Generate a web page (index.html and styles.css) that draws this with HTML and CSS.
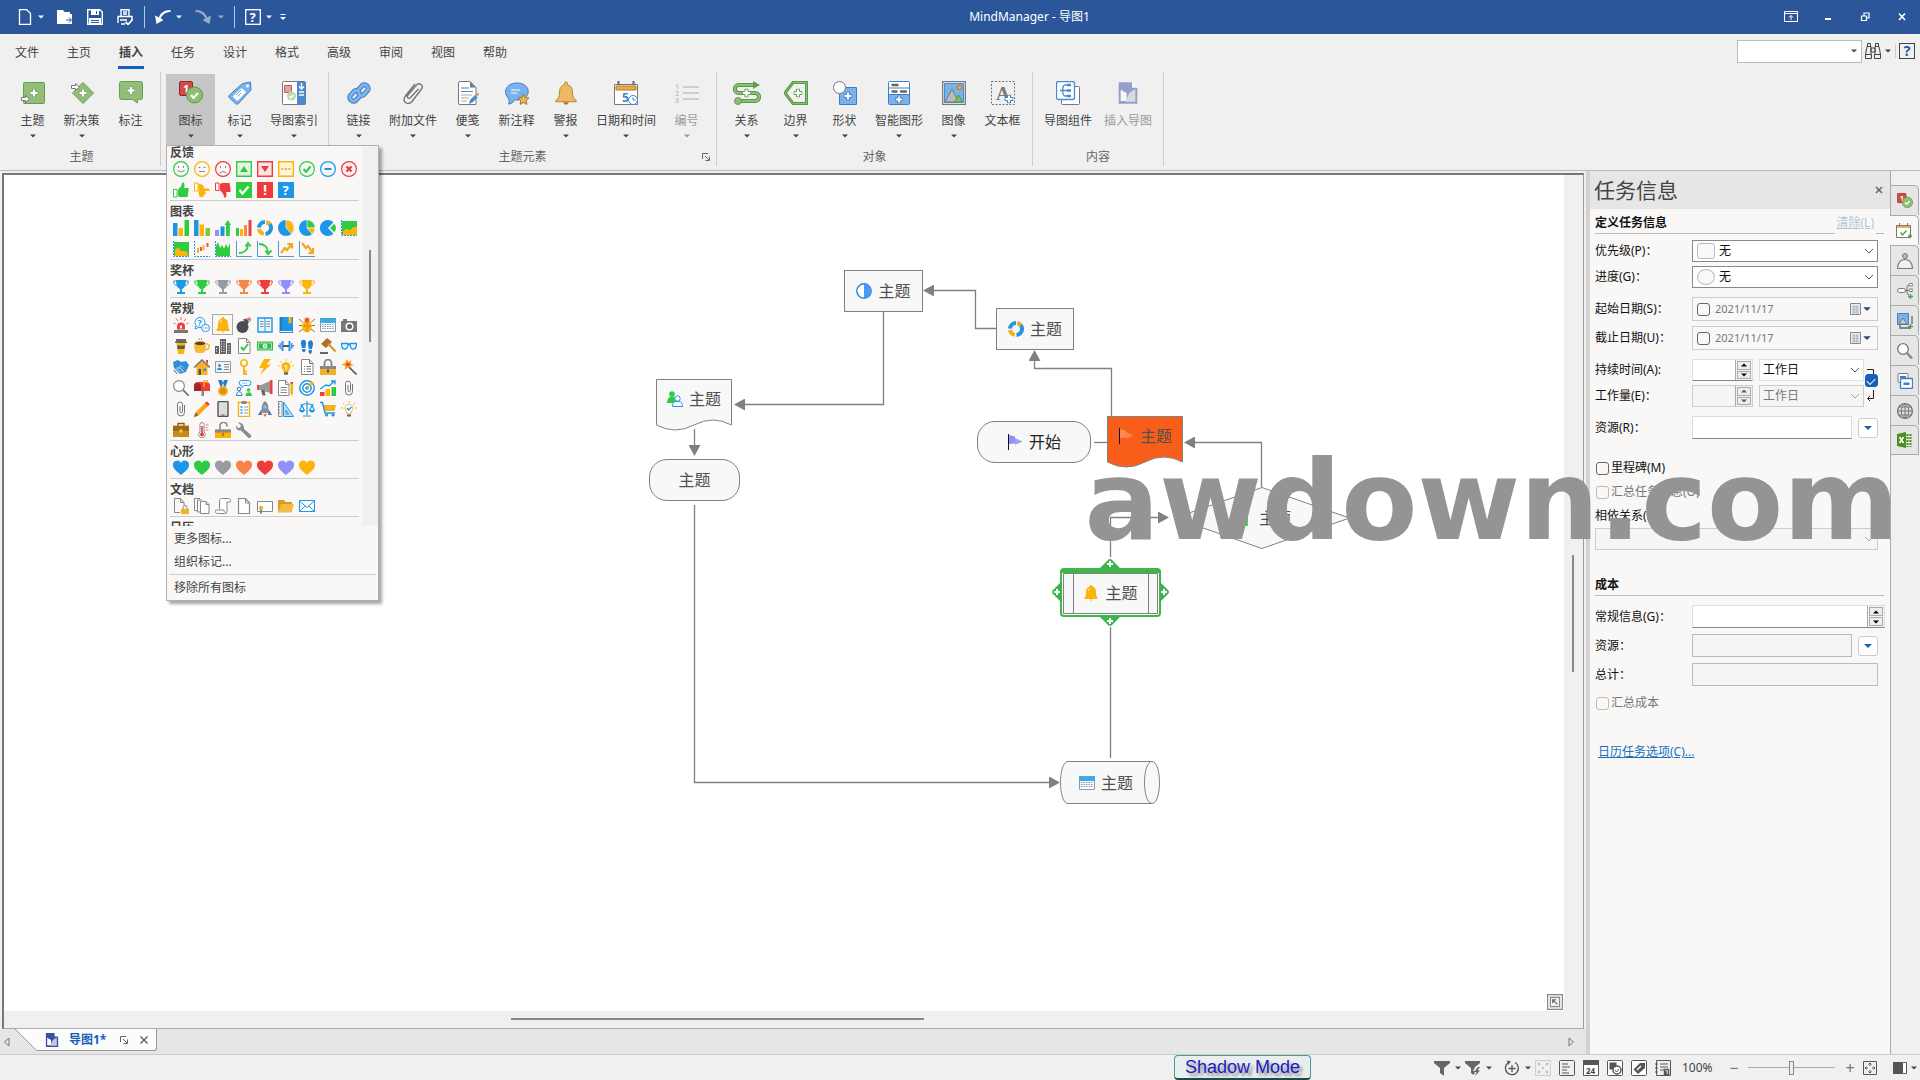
FILE: index.html
```html
<!DOCTYPE html>
<html lang="zh-CN">
<head>
    <meta charset="UTF-8">
    <meta name="viewport" content="width=device-width, initial-scale=1.0">
    <title>MindManager - 导图1</title>
    <link rel="stylesheet" href="styles.css">
</head>
<body>
    <!-- shared icons -->
    <svg class="sprite">
        <symbol id="caret" viewBox="0 0 8 8"><path d="M1 2.5h6L4 5.5z" fill="currentColor"/></symbol>
        <symbol id="chevron" viewBox="0 0 10 10"><path d="M1 3l4 4 4-4" fill="none" stroke="currentColor"/></symbol>
        <symbol id="launch" viewBox="0 0 10 10"><path d="M1.5 7V1.5H7M4 4l4 4M8.500 4.500v4h-4" fill="none" stroke="currentColor"/></symbol>
        <symbol id="trophy" viewBox="0 0 16 16"><path d="M3 1h10c0 4-1 8-4 9v3h3v2H4v-2h3v-3C4 9 3 5 3 1z" fill="currentColor"/><path d="M3 2H.7c0 3 1 4 3.300 4.500M13 2h2.300c0 3-1 4-3.300 4.500" fill="none" stroke="currentColor"/></symbol>
        <symbol id="heart" viewBox="0 0 16 16"><path d="M8 15C3 11 0 8.500 0 5a4.200 4.200 0 0 1 8-2 4.200 4.200 0 0 1 8 2c0 3.500-3 6-8 10z" fill="currentColor"/></symbol>
        <symbol id="bell" viewBox="0 0 16 16"><path d="M8 0c1 0 1.300.7 1.300 1.400C12 2 13 4 13 7c0 3 .3 4.500 1.500 5.500V14h-13v-1.500C2.700 11.500 3 10 3 7c0-3 1-5 3.700-5.600C6.700.7 7 0 8 0zM6.500 14.500h3L8 16z" fill="#fcb40b"/><path d="M5.500 6c0-1.500.6-2.300 1.500-2.600" fill="none" stroke="#fff" stroke-width=".8"/></symbol>
        <symbol id="donut" viewBox="0 0 16 16"><g fill="none" stroke-width="4"><path d="M9.500 2.200A6 6 0 0 1 8.500 14" stroke="#2196e3"/><path d="M6.800 13.900A6 6 0 0 1 2 9" stroke="#f6b21b"/><path d="M2 7.700A6 6 0 0 1 8 2" stroke="#2196e3"/><path d="M9.500 2.200a6 6 0 0 1 3.300 2.200" stroke="#f6b21b"/></g></symbol>
        <symbol id="rise" viewBox="0 0 16 16"><path d="M0 10h4v6H0z" fill="#8f8ff5"/><path d="M5.500 6.500h4V16h-4z" fill="#1e90e0"/><path d="M11 16V5H9.500l3.300-5L16 5h-1.200v11z" fill="#2ecc40"/></symbol>
        <symbol id="calendar" viewBox="0 0 16 16"><path d="M.5 1.500h15v13H.5z" fill="#fff" stroke="#8a9aa8"/><path d="M0 1h16v5H0z" fill="#3fa9e0"/><path d="M2 7.500h12M2 9.500h12M2 11.500h12" stroke="#7a9ab5" stroke-dasharray="1.500 1"/></symbol>
        <symbol id="flag" viewBox="0 0 16 16"><path d="M1.500 0v16" stroke="#111"/><path d="M2 1l6 1.500v7L2 10z" fill="currentColor"/><path d="M8 4l7.500 3.500L8 11z" fill="currentColor" opacity=".85"/></symbol>
        <symbol id="clip" viewBox="0 0 16 16"><path d="M11.500 4v7.500a3.500 3.500 0 0 1-7 0V3.500a2.500 2.500 0 0 1 5 0v7a1.200 1.200 0 0 1-2.500 0V5" fill="none" stroke="#777"/></symbol>
        <symbol id="mapdoc" viewBox="0 0 16 18"><path d="M1 1h10l4 4v12H1z" fill="currentColor"/><path d="M11 0l5 5h-5z" fill="#fff"/><path d="M2.500 6.500L7 9v6H2.500z" fill="#fff"/><path d="M13.500 6L9 9l-3 6.500h7.500z" fill="#c4c8d8"/></symbol>
        <symbol id="badge" viewBox="0 0 24 24"><rect x=".5" y=".5" width="13" height="14" rx="1.500" fill="#d34a4a" stroke="#9c2020"/><text x="4" y="12" font-size="11" font-weight="bold" fill="#fff">1</text><circle cx="15.500" cy="14" r="8" fill="#8fbd74" stroke="#579a49"/><path d="M12 14l2.500 3 4.500-5" fill="none" stroke="#fff" stroke-width="2"/></symbol>
        <symbol id="plus" viewBox="0 0 9 9"><path d="M3 .5h3V3h2.500v3H6v2.500H3V6H.5V3H3z" fill="#fff" stroke="currentColor"/></symbol>
    </svg>

    <header class="titlebar">
        <div class="quick">
            <button class="q-small"><svg viewBox="0 0 16 16"><path d="M2.500.5h7l4 4v11h-11z" fill="none" stroke="#fff" stroke-width="1.300"/></svg></button>
            <button class="q-caret"><svg><use href="#caret"/></svg></button>
            <button><svg viewBox="0 0 16 16"><path d="M0 1h6l1.500 2H13v2h2v10H0z" fill="#fff"/><path d="M9 11h5M12 8.500l2.500 2.500-2.500 2.500" fill="none" stroke="#2b579a"/></svg></button>
            <button><svg viewBox="0 0 16 16"><path d="M.7.700h12L15.300 3v12.300H.7z" fill="none" stroke="#fff" stroke-width="1.400"/><path d="M4 1h8v5H4zM2 9h12v6H2z" fill="#fff"/><path d="M9.500 2v3M4 11.500h8M4 13.500h8" stroke="#2b579a"/></svg></button>
            <button><svg viewBox="0 0 16 16"><path d="M4 7V.7h8V7M6 3h4M6 5h4M1 14V7.500h14V11M3 11h7M4 15h4" fill="none" stroke="#fff" stroke-width="1.400"/><path d="M8.500 13l2.500 2.500 4.500-5" fill="none" stroke="#fff" stroke-width="1.800"/></svg></button>
            <i class="q-sep"></i>
            <button class="q-small"><svg viewBox="0 0 16 16"><path d="M15.500 1C9 1 5 4.500 4 8.500L0 6.500 1.500 15l7-4-2.800-1.500C7 5.500 11 3 15.500 3z" fill="#fff"/></svg></button>
            <button class="q-caret"><svg><use href="#caret"/></svg></button>
            <button class="q-dim"><svg viewBox="0 0 16 16"><path d="M.5 1C7 1 11 4.500 12 8.500l4-2L14.500 15l-7-4 2.800-1.500C9 5.500 5 3 .5 3z" fill="#fff"/></svg></button>
            <button class="q-caret q-dim"><svg><use href="#caret"/></svg></button>
            <i class="q-sep"></i>
            <button class="q-small"><svg viewBox="0 0 16 16"><rect x=".7" y=".7" width="14.600" height="14.600" fill="none" stroke="#fff" stroke-width="1.300"/><text x="4.500" y="12.500" font-size="13" font-weight="bold" fill="#fff">?</text></svg></button>
            <button class="q-caret"><svg><use href="#caret"/></svg></button>
            <button class="q-caret q-more"><svg viewBox="0 0 8 8"><path d="M1.500 1.500h5" stroke="#fff"/><path d="M1 4h6L4 7z" fill="#fff"/></svg></button>
        </div>
        <h1>MindManager - 导图1</h1>
        <div class="window-buttons">
            <button><svg viewBox="0 0 14 12"><path d="M.5.5h13v10H.5zM.5 2.500h13M7 9V4.500M5 6.500l2-2 2 2" fill="none" stroke="#fff"/></svg></button>
            <button><svg viewBox="0 0 14 12"><path d="M4 8h6" stroke="#fff" stroke-width="2"/></svg></button>
            <button><svg viewBox="0 0 14 12"><path d="M3.500 5h5v4.500h-5zM6 4.500V2h5v5H9" fill="none" stroke="#fff" stroke-width="1.200"/></svg></button>
            <button><svg viewBox="0 0 14 12"><path d="M4 2.500l6 6.500M10 2.500L4 9" stroke="#fff" stroke-width="1.600"/></svg></button>
        </div>
    </header>

    <nav class="menubar">
        <a href="#">文件</a>
        <a href="#">主页</a>
        <a href="#" class="active">插入</a>
        <a href="#">任务</a>
        <a href="#">设计</a>
        <a href="#">格式</a>
        <a href="#">高级</a>
        <a href="#">审阅</a>
        <a href="#">视图</a>
        <a href="#">帮助</a>
        <div class="find">
            <div class="find-box"><input type="text" aria-label="查找"><svg><use href="#caret"/></svg></div>
            <button><svg class="binoculars" viewBox="0 0 16 16"><path d="M2.500.5h3v3h-3zM10.500.5h3v3h-3zM2 3.500h4v8H.5zM10 3.500h4l1.500 8H10zM.5 11.500h6v4h-6zM9.500 11.500h6v4h-6zM6 5h4v4H6z" fill="none" stroke="#444"/></svg></button>
            <button><svg class="caret"><use href="#caret"/></svg></button>
            <i></i>
            <button class="help">?</button>
        </div>
    </nav>

    <section class="ribbon">
        <div class="group">
            <div class="tools">
                <button><svg viewBox="0 0 24 24"><rect x="2.500" y="1.500" width="21" height="21" rx="1" fill="#93bd78" stroke="#62a050"/><use href="#plus" x="8.500" y="7.500" width="9" height="9" color="#7fae68"/><path d="M.5 16.500h4v-2l4 3.500-4 3.500v-2h-4z" fill="#fff" stroke="#777"/></svg><span>主题</span><svg class="caret"><use href="#caret"/></svg></button>
                <button><svg viewBox="0 0 24 24"><path d="M13 1.500L23.500 12 13 22.500 2.500 12z" fill="#93bd78" stroke="#62a050"/><use href="#plus" x="8.500" y="7.500" width="9" height="9" color="#7fae68"/><path d="M1.500 4.500h4v-2L9.500 6l-4 3.500v-2h-4z" fill="#fff" stroke="#777"/></svg><span>新决策</span><svg class="caret"><use href="#caret"/></svg></button>
                <button><svg viewBox="0 0 24 24"><path d="M2.500.5h19a2 2 0 0 1 2 2v14a2 2 0 0 1-2 2H18.500V22l-5-3.500h-11a2 2 0 0 1-2-2v-14a2 2 0 0 1 2-2z" fill="#93bd78" stroke="#62a050"/><use href="#plus" x="7.500" y="5" width="9" height="9" color="#7fae68"/></svg><span>标注</span></button>
            </div>
            <div class="group-name">主题</div>
        </div>
        <div class="group">
            <div class="tools">
                <div class="dropdown">
                    <button class="open"><svg><use href="#badge"/></svg><span>图标</span><svg class="caret"><use href="#caret"/></svg></button>
                    <div class="gallery">
                        <div class="gallery-body">
                            <div class="gallery-list">
                                <section>
                                    <h3>反馈</h3>
                                    <div class="icons">
                                        <button class="c-green"><svg viewBox="0 0 16 16"><circle cx="8" cy="8" r="7.400" fill="none" stroke="currentColor" stroke-width="1.200"/><path d="M4.500 9.500q3.500 3 7 0" fill="none" stroke="#888"/><path d="M5.500 5v2M10.500 5v2" stroke="#888"/></svg></button>
                                        <button class="c-yellow"><svg viewBox="0 0 16 16"><circle cx="8" cy="8" r="7.400" fill="none" stroke="currentColor" stroke-width="1.200"/><path d="M5 10.500h6M4.500 6.500h2M9.500 6.500h2" stroke="#888"/></svg></button>
                                        <button class="c-red"><svg viewBox="0 0 16 16"><circle cx="8" cy="8" r="7.400" fill="none" stroke="currentColor" stroke-width="1.200"/><path d="M4.500 12q3.500-3 7 0" fill="none" stroke="#888"/><path d="M5.500 5v2M10.500 5v2" stroke="#888"/></svg></button>
                                        <button class="c-green"><svg viewBox="0 0 16 16"><path d="M.7.700h14.600v14.600H.7z" fill="#e2f5e2" stroke="currentColor" stroke-width="1.400"/><path d="M4 11l4-6 4 6z" fill="currentColor"/></svg></button>
                                        <button class="c-red"><svg viewBox="0 0 16 16"><path d="M.7.700h14.600v14.600H.7z" fill="#fbe4e4" stroke="currentColor" stroke-width="1.400"/><path d="M4 5l4 6 4-6z" fill="currentColor"/></svg></button>
                                        <button class="c-yellow"><svg viewBox="0 0 16 16"><path d="M.7.700h14.600v14.600H.7z" fill="#fff5dc" stroke="currentColor" stroke-width="1.400"/><path d="M3.500 8h9" stroke="currentColor" stroke-width="2" stroke-dasharray="2 1.500"/></svg></button>
                                        <button class="c-green"><svg viewBox="0 0 16 16"><circle cx="8" cy="8" r="7.400" fill="none" stroke="currentColor" stroke-width="1.200"/><path d="M4.500 8l2.500 3 4.500-5.500" fill="none" stroke="currentColor" stroke-width="2"/></svg></button>
                                        <button class="c-blue"><svg viewBox="0 0 16 16"><circle cx="8" cy="8" r="7.400" fill="none" stroke="currentColor" stroke-width="1.200"/><path d="M4.500 8h7" stroke="currentColor" stroke-width="2"/></svg></button>
                                        <button class="c-red"><svg viewBox="0 0 16 16"><circle cx="8" cy="8" r="7.400" fill="none" stroke="currentColor" stroke-width="1.200"/><path d="M5.500 5.500l5 5M10.500 5.500l-5 5" stroke="currentColor" stroke-width="2.400"/></svg></button>
                                        <button class="c-green"><svg viewBox="0 0 16 16"><path d="M.5 7.500h3.500V15H.5z" fill="#fff" stroke="currentColor"/><path d="M5 7.500C7 6 9 4 9 .5c2.500-.5 3 2 2 5.500h4.500v3L14.500 15H7l-2-1z" fill="currentColor"/></svg></button>
                                        <button class="c-yellow"><svg viewBox="0 0 16 16"><path d="M.5 1h3.500v8H.5z" fill="#fff" stroke="currentColor"/><path d="M4.500 1.500L9 3l1.500 3.500h5V9H11l1 2.500-2 1.500-1 2H5.500L4.500 10z" fill="currentColor"/></svg></button>
                                        <button class="c-red"><svg viewBox="0 0 16 16"><path d="M.5 1h3.500v7.500H.5z" fill="#fff" stroke="currentColor"/><path d="M5 8.500C7 10 9 12 9 15.500c2.500.5 3-2 2-5.500h4.500V7L14.500 1H7L5 2z" fill="currentColor"/></svg></button>
                                        <button class="c-green"><svg viewBox="0 0 16 16"><path d="M0 0h16v16H0z" fill="currentColor"/><path d="M3.500 8l3 3.500 6-7" fill="none" stroke="#fff" stroke-width="2.200"/></svg></button>
                                        <button class="c-red"><svg viewBox="0 0 16 16"><path d="M0 0h16v16H0z" fill="currentColor"/><path d="M8 3v6.500M8 11v2" stroke="#fff" stroke-width="2.400"/></svg></button>
                                        <button class="c-blue"><svg viewBox="0 0 16 16"><path d="M0 0h16v16H0z" fill="currentColor"/><text x="4.500" y="13" font-size="13" font-weight="bold" fill="#fff">?</text></svg></button>
                                    </div>
                                </section>
                                <section>
                                    <h3>图表</h3>
                                    <div class="icons">
                                        <button><svg viewBox="0 0 16 16"><path d="M0 3h4.500v13H0z" fill="#1e96e8"/><path d="M5.500 8h4.500v8H5.500z" fill="#fcb40b"/><path d="M11.500 0H16v16h-4.500z" fill="#2ecc40"/></svg></button>
                                        <button><svg viewBox="0 0 16 16"><path d="M0 0h4.500v16H0z" fill="#1e96e8"/><path d="M5.500 4.500h4.500V16H5.500z" fill="#fcb40b"/><path d="M11.500 8H16v8h-4.500z" fill="#86c440"/></svg></button>
                                        <button><svg><use href="#rise"/></svg></button>
                                        <button><svg viewBox="0 0 16 16"><path d="M0 8h3v8H0z" fill="#2ecc40"/><path d="M4 9h3v7H4z" fill="#fcb40b"/><path d="M8 5h3v11H8z" fill="#f9844a"/><path d="M12.500 0h3v16h-3z" fill="#ef3b3b"/></svg></button>
                                        <button><svg><use href="#donut"/></svg></button>
                                        <button><svg viewBox="0 0 16 16"><circle cx="8" cy="8" r="8" fill="#1e96e8"/><path d="M8 8V0a8 8 0 0 1 5.500 13.800z" fill="#fcb40b" stroke="#fff" stroke-width=".6"/></svg></button>
                                        <button><svg viewBox="0 0 16 16"><circle cx="8" cy="8" r="8" fill="#1e96e8"/><path d="M8 8V0a8 8 0 0 1 8 8z" fill="#2ecc40" stroke="#fff" stroke-width=".6"/><path d="M8 8h8a8 8 0 0 1-3 6z" fill="#fcb40b" stroke="#fff" stroke-width=".6"/></svg></button>
                                        <button><svg viewBox="0 0 16 16"><path d="M8 8l5.500-5.700A8 8 0 1 0 13.500 13.700z" fill="#1e96e8"/><path d="M10 8l4.300-4.300a7 7 0 0 1 0 8.600z" fill="#2ecc40"/></svg></button>
                                        <button><svg viewBox="0 0 16 16"><path d="M1 1h15v14H1z" fill="#2ecc40"/><path d="M2 15v-4l3-2 4 1 3-3h4v8z" fill="#fcb40b"/><path d="M.5 0v15.500H16" fill="none" stroke="#1e96e8" stroke-dasharray="2 1"/></svg></button>
                                        <button><svg viewBox="0 0 16 16"><path d="M1 1h15v14H1z" fill="#2ecc40"/><path d="M2 15V9l3-3 3 4h5l2 3v2z" fill="#fcb40b"/><path d="M.5 0v15.500H16" fill="none" stroke="#1e96e8" stroke-dasharray="2 1"/></svg></button>
                                        <button><svg viewBox="0 0 16 16"><path d="M4 7v5M9.500 4v5" stroke="#fcb40b" stroke-width="2"/><path d="M7 6v4M13.500 2v4" stroke="#e05a4a" stroke-width="2"/><path d="M.5 0v15.500H16" fill="none" stroke="#1e96e8" stroke-dasharray="2 1"/></svg></button>
                                        <button><svg viewBox="0 0 16 16"><path d="M1 15V5l2-4 2 6 2-3 2 4 2-5 2 4 2-5v13z" fill="#2ecc40"/><path d="M.5 0v15.500H16" fill="none" stroke="#1e96e8" stroke-dasharray="2 1"/></svg></button>
                                        <button><svg viewBox="0 0 16 16"><path d="M3 12c5 0 9-3 9-8M9.500 5.500L12 2l3 3.500" fill="none" stroke="#2ecc40" stroke-width="1.800"/><path d="M.5 0v15.500H16" fill="none" stroke="#4a9ad8"/></svg></button>
                                        <button><svg viewBox="0 0 16 16"><path d="M2 3c5 0 9 3 9 8M8.500 9.500L11 13l3.500-3.500" fill="none" stroke="#2ecc40" stroke-width="1.800"/><path d="M.5 0v15.500H16" fill="none" stroke="#4a9ad8"/></svg></button>
                                        <button><svg viewBox="0 0 16 16"><path d="M3 12l4-5 2 2 4-5M9.500 3H14v4.500" fill="none" stroke="#f6a81b" stroke-width="2.200"/><path d="M.5 0v15.500H16" fill="none" stroke="#4a9ad8"/></svg></button>
                                        <button><svg viewBox="0 0 16 16"><path d="M3 2l4 5 2-2 4 6M14 7v5H9.500" fill="none" stroke="#f6a81b" stroke-width="2.200"/><path d="M.5 0v15.500H16" fill="none" stroke="#4a9ad8"/></svg></button>
                                    </div>
                                </section>
                                <section>
                                    <h3>奖杯</h3>
                                    <div class="icons">
                                        <button class="c-blue"><svg><use href="#trophy"/></svg></button>
                                        <button class="c-green"><svg><use href="#trophy"/></svg></button>
                                        <button class="c-gray"><svg><use href="#trophy"/></svg></button>
                                        <button class="c-orange"><svg><use href="#trophy"/></svg></button>
                                        <button class="c-red"><svg><use href="#trophy"/></svg></button>
                                        <button class="c-violet"><svg><use href="#trophy"/></svg></button>
                                        <button class="c-yellow"><svg><use href="#trophy"/></svg></button>
                                    </div>
                                </section>
                                <section>
                                    <h3>常规</h3>
                                    <div class="icons">
                                        <button><svg viewBox="0 0 16 16"><path d="M4 12.500V9.500a4 4 0 0 1 8 0v3z" fill="#ef3b3b"/><path d="M7 8.500h2v3H7z" fill="#fff"/><path d="M1 13h14v3H1z" fill="#777"/><path d="M8 0v3M3 1.500l2 2.500M13 1.500L11 4M.5 6l2 1M15.500 6l-2 1" stroke="#f06060"/></svg></button>
                                        <button><svg viewBox="0 0 16 16"><circle cx="6" cy="5.500" r="5" fill="#fff" stroke="#1e96e8"/><path d="M2 9l-1 3 3.500-1.500" fill="#fff" stroke="#1e96e8"/><text x="3.500" y="9" font-size="9" font-weight="bold" fill="#1e96e8">?</text><ellipse cx="11.500" cy="11" rx="4" ry="3.600" fill="#fff" stroke="#1e96e8"/><path d="M9.500 11h4" stroke="#1e96e8" stroke-dasharray="1 .5"/></svg></button>
                                        <button class="selected"><svg><use href="#bell"/></svg></button>
                                        <button><svg viewBox="0 0 16 16"><circle cx="6.500" cy="10" r="6" fill="#4b4b55"/><path d="M7 2.500l4-1 2 4-2 2z" fill="#4b4b55"/><path d="M10 3q2-2 4-1" fill="none" stroke="#888"/><path d="M13.500 0l.7 1.500 1.800.5-1.500 1 .3 2-1.800-1.200L11.500 4l.6-1.500-.6-1.300z" fill="#f26b5b"/></svg></button>
                                        <button><svg viewBox="0 0 16 16"><path d="M1 1h14v14H1z" fill="#eaf5fc" stroke="#1e96e8" stroke-width="1.400"/><path d="M8 1v14" stroke="#1e96e8"/><path d="M3 4.500h3.500M3 7h3.500M3 9.500h3.500M9.500 4.500H13M9.500 7H13M9.500 9.500H13" stroke="#888"/></svg></button>
                                        <button><svg viewBox="0 0 16 16"><path d="M1.500 0H15v16H1.500z" fill="#1e96e8"/><path d="M3 0v16" stroke="#1565a8"/><path d="M10.500 0h3v7L12 5.500 10.500 7z" fill="#fcb40b"/><path d="M2 14.500h12" stroke="#fff"/></svg></button>
                                        <button><svg viewBox="0 0 16 16"><path d="M0 2l4 3.500M16 2l-4 3.500M0 8.500h16M0 15l4-3M16 15l-4-3" stroke="#a87818"/><ellipse cx="8" cy="9.500" rx="4.800" ry="6" fill="#fcb40b"/><circle cx="8" cy="3" r="2.500" fill="#ef5b3b"/><path d="M8 5v10" stroke="#b87a10" stroke-width=".7"/><circle cx="6" cy="9" r=".8" fill="#ef3b3b"/><circle cx="10" cy="9" r=".8" fill="#ef3b3b"/></svg></button>
                                        <button><svg><use href="#calendar"/></svg></button>
                                        <button><svg viewBox="0 0 16 16"><path d="M0 4h2V2h4v2h10v11H0z" fill="#777"/><circle cx="8.500" cy="9.500" r="4" fill="#fff"/><circle cx="8.500" cy="9.500" r="2.500" fill="#666"/></svg></button>
                                        <button><svg viewBox="0 0 16 16"><path d="M3 1h10v2.500h1V5H2V3.500h1z" fill="#666"/><path d="M3.500 5h9L11 16H5z" fill="#fcb40b"/><path d="M4 7.500h8l-.5 3.500h-7z" fill="#5c5c5c"/></svg></button>
                                        <button><svg viewBox="0 0 16 16"><path d="M0 6c1 2 11 2 12 0 0 5-1 8-3 9H3C1 14 0 11 0 6z" fill="#f4bb35"/><ellipse cx="6" cy="5.500" rx="5.500" ry="2.200" fill="#5c4326" stroke="#f4bb35"/><path d="M12 6c4-1 5 5-1 6" fill="none" stroke="#f4bb35" stroke-width="1.600"/><path d="M5 0v2M7.500 0v2" stroke="#999"/></svg></button>
                                        <button><svg viewBox="0 0 16 16"><path d="M5 1h6v15H5zM0 8h4v8H0zM12 5h4v11h-4z" fill="#666"/><path d="M6.500 3v12M9 3v12M1.500 10v5M14 7v8" stroke="#fff" stroke-dasharray="1 1.500"/></svg></button>
                                        <button><svg viewBox="0 0 16 16"><path d="M2.500.5h8l3.500 4v11H2.500z" fill="#fff" stroke="#888"/><path d="M10.500.5v4H14" fill="none" stroke="#888"/><path d="M5 9l2.500 3L12 6" fill="none" stroke="#2ecc40" stroke-width="2"/></svg></button>
                                        <button><svg viewBox="0 0 16 16"><path d="M0 3.500h16v9H0z" fill="#2dbb48"/><path d="M1.500 5h13v6h-13z" fill="none" stroke="#fff" stroke-width=".6"/><circle cx="8" cy="8" r="2.300" fill="#fff"/><path d="M8 6.500v3" stroke="#2dbb48"/></svg></button>
                                        <button><svg viewBox="0 0 16 16"><path d="M5 8h6" stroke="#555" stroke-width="2"/><path d="M3.500 3h2v10h-2zM10.500 3h2v10h-2z" fill="#1e96e8"/><path d="M1.500 5h1.500v6H1.500zM13 5h1.500v6H13zM0 7h1.500v2H0zM14.500 7H16v2h-1.500z" fill="#7f7ff0"/></svg></button>
                                        <button><svg viewBox="0 0 16 16"><path d="M2 6c-1-4 4-6 5-2 .5 3-1 4-.5 6H3zM3 11h3.500c.5 4-3 4-3.500 1zM9 6c0-5 5-5 5 0 0 2-1 3-1 5H9.700zM9.500 12H13c0 5-3 5-3.500 1z" fill="#1e80d0"/></svg></button>
                                        <button><svg viewBox="0 0 16 16"><path d="M1 6l6-6 5 4-6 6z" fill="#a8741d"/><path d="M8 5.500l7.500 8" stroke="#c9952c" stroke-width="2"/><path d="M0 14h8v2H0z" fill="#666"/></svg></button>
                                        <button><svg viewBox="0 0 16 16"><path d="M.5 5.500H7c0 8-6.500 7-6.500 0zM9 5.500h6.500c0 7-6.500 8-6.500 0zM7 6.500h2" fill="#eaf6fd" stroke="#1e96e8" stroke-width="1.300"/></svg></button>
                                        <button><svg viewBox="0 0 16 16"><path d="M0 3l5-2 3 2 5-1 3 4-3 7-6 2-6-6z" fill="#2d8fd5"/><path d="M2 9l5 5 6-2-5-6-3 2z" fill="#7dbbe6"/><path d="M1 11l3 4M8 8l4 4M6 10l3 4" stroke="#1e6ca8"/></svg></button>
                                        <button><svg viewBox="0 0 16 16"><path d="M8 1L0 8.500h2.500V16h11V8.500H16z" fill="#f4b32a"/><path d="M0 8.500L8 1l8 7.500" fill="none" stroke="#777" stroke-width="1.600"/><path d="M12 1h2v4l-2-2z" fill="#ef3b3b"/><path d="M4.500 10H7v6H4.500z" fill="#555"/><path d="M9.500 9.500H12V12H9.500z" fill="#1e96e8"/></svg></button>
                                        <button><svg viewBox="0 0 16 16"><path d="M.5 2.500h15v11H.5z" fill="#f2f2f2" stroke="#999"/><circle cx="4.500" cy="6.500" r="1.500" fill="#1e96e8"/><path d="M2 11c0-3 5-3 5 0z" fill="#1e96e8"/><path d="M9 5.500h5M9 8h5M9 10.500h5" stroke="#888"/></svg></button>
                                        <button><svg viewBox="0 0 16 16"><circle cx="8" cy="4" r="3.200" fill="none" stroke="#fcb40b" stroke-width="1.600"/><path d="M8 7v9M8 12.500h3M8 15h3" stroke="#fcb40b" stroke-width="1.800"/></svg></button>
                                        <button><svg viewBox="0 0 16 16"><path d="M7 0h7L9.500 5.500H14L3 16l3.500-7H2z" fill="#fcb40b"/></svg></button>
                                        <button><svg viewBox="0 0 16 16"><path d="M5.500 13.500V11.500C1.500 8 4 3 8 3s6.500 5 2.500 8.500v2z" fill="#fcb40b"/><path d="M6 14.500h4" stroke="#666" stroke-width="2.400"/><path d="M8 7v4M6.500 7h3" stroke="#fff"/><path d="M8 0v2M2 2l1.500 1.500M14 2l-1.500 1.500M0 7h2M14 7h2" stroke="#f6c21b"/></svg></button>
                                        <button><svg viewBox="0 0 16 16"><path d="M2.500.5h8l3.500 4v11H2.500z" fill="#fff" stroke="#888"/><path d="M10.500.5v4H14M5 7.500h1M7.500 7.500H12M5 10h1M7.500 10H12M5 12.500h1M7.500 12.500H12" fill="none" stroke="#777"/></svg></button>
                                        <button><svg viewBox="0 0 16 16"><path d="M4.500 7.500V4a3.500 3.500 0 0 1 7 0v3.500" fill="none" stroke="#888" stroke-width="1.800"/><path d="M0 7h16v9H0z" fill="#f2b22c"/><path d="M0 7h16v3H0z" fill="#888"/><path d="M8 10.500v3" stroke="#555" stroke-width="2"/></svg></button>
                                        <button><svg viewBox="0 0 16 16"><path d="M6 0l1.500 3 3-2-.8 3.500L13 6l-3.500 1L10 11 7 8.500 3.500 11l1-4L0 5.500 4 4z" fill="#f9a01b"/><circle cx="7" cy="5.500" r="1.800" fill="#ef3b3b"/><path d="M8.500 8.500l7 7" stroke="#555" stroke-width="1.600"/></svg></button>
                                        <button><svg viewBox="0 0 16 16"><circle cx="6" cy="6" r="5.400" fill="#fff" stroke="#888" stroke-width="1.200"/><path d="M10 10l6 6" stroke="#777" stroke-width="1.800"/></svg></button>
                                        <button><svg viewBox="0 0 16 16"><path d="M0 11V6a4 4 0 0 1 4-4h8a4 4 0 0 1 4 4v5z" fill="#ef3b3b"/><path d="M0 11V6.500a3.500 3.500 0 0 1 7 0V11z" fill="#a82222"/><path d="M7.500 11h2.500v5H7.500z" fill="#888"/><path d="M10 7V0h3v3" fill="none" stroke="#f6b21b" stroke-width="1.500"/></svg></button>
                                        <button><svg viewBox="0 0 16 16"><path d="M3 0h4l2 6-3 2zM13 0H9L7 6l3 2z" fill="#1e80d0"/><circle cx="8" cy="11" r="5" fill="#f6b21b"/><circle cx="8" cy="11" r="3" fill="#d8920e"/></svg></button>
                                        <button><svg viewBox="0 0 16 16"><path d="M5.500.500h7a2 2 0 0 1 0 5H8l-2 2v-2a2 2 0 0 1-.5-5z" fill="#fff" stroke="#1e96e8"/><path d="M6.500 3h5" stroke="#1e96e8" stroke-dasharray="1 .7"/><circle cx="3" cy="9" r="1.800" fill="none" stroke="#1e80d0"/><path d="M.5 15.500c0-5 5.500-5 5.500 0z" fill="none" stroke="#1e80d0"/><circle cx="12.500" cy="10" r="1.800" fill="#2ecc40"/><path d="M9.500 16c0-5 6.500-5 6.500 0z" fill="#2ecc40"/></svg></button>
                                        <button><svg viewBox="0 0 16 16"><path d="M0 5h4L13 1v12L4 10H0z" fill="#999"/><path d="M13 0h2.500v14H13zM0 5h2v5H0z" fill="#ef4040"/><path d="M4 10h3.500l1 5.500H5.500z" fill="#666"/></svg></button>
                                        <button><svg viewBox="0 0 16 16"><path d="M.5.500h7l3.500 4v11H.5z" fill="#fff" stroke="#888"/><path d="M7.500.500v4H11M2.500 7.500H9M2.500 10H9M2.500 12.500H9" fill="none" stroke="#888"/><path d="M12.500 4H15v9.500L13.800 16l-1.300-2.500z" fill="#fcb40b"/><path d="M12.500 2H15v2h-2.500z" fill="#ef3b3b"/></svg></button>
                                        <button><svg viewBox="0 0 16 16"><g fill="#fff" stroke="#1e96e8" stroke-width="1.500"><circle cx="8" cy="8" r="7.200"/><circle cx="8" cy="8" r="4.200"/></g><circle cx="8" cy="8" r="1.800" fill="#1e96e8"/><path d="M8 8l6-6M12 1l.5 2.500L15 4" fill="none" stroke="#f6a81b" stroke-width="1.500"/></svg></button>
                                        <button><svg viewBox="0 0 16 16"><path d="M0 12h4.500v4H0z" fill="#ef3b3b"/><path d="M5.500 9H10v7H5.500z" fill="#fcb40b"/><path d="M11.500 7H16v9h-4.500z" fill="#2ecc40"/><path d="M0 9l6-4 3 1 5-4.500M11 1h4v3.500" fill="none" stroke="#1e96e8" stroke-width="1.400"/></svg></button>
                                        <button><svg><use href="#clip"/></svg></button>
                                        <button><svg><use href="#clip"/></svg></button>
                                        <button><svg viewBox="0 0 16 16"><path d="M0 16l1.500-4.500L12 1l3 3L4.500 14.500z" fill="#f6a81b"/><path d="M0 16l1.500-4.500 3 3z" fill="#8a6a3a"/><path d="M11 2l1.800-1.800 3 3L14 5z" fill="#ef3b3b"/></svg></button>
                                        <button><svg viewBox="0 0 16 16"><rect x="3" y=".5" width="10" height="15" rx="1" fill="#ddd" stroke="#555" stroke-width="1.400"/><path d="M6.500 14h3" stroke="#555"/></svg></button>
                                        <button><svg viewBox="0 0 16 16"><path d="M2.500 1.500h11v14h-11z" fill="#fff" stroke="#f6b21b" stroke-width="1.400"/><path d="M5.500 0h5v3h-5z" fill="#888"/><path d="M4.500 6h2M4.500 9h2M4.500 12h2" stroke="#1e96e8" stroke-width="1.500"/><path d="M8 6h4M8 9h4M8 12h4" stroke="#999"/></svg></button>
                                        <button><svg viewBox="0 0 16 16"><path d="M8 0c3 2 4 6 3 12H5C4 6 5 2 8 0z" fill="#8a8d96"/><path d="M4.500 8L1 14h4zM11.500 8L15 14h-4z" fill="#4f7aa8"/><circle cx="8" cy="6" r="1.800" fill="#7cc4f5"/><path d="M6 13h4l-2 3z" fill="#f26b3b"/></svg></button>
                                        <button><svg viewBox="0 0 16 16"><path d="M.5.500h3.500v15H.5zM.5 3H2M.5 6H2M.5 9H2M.5 12H2" fill="none" stroke="#888"/><path d="M5.500 1l10 14.500h-10z" fill="#b9dcf5" stroke="#1e96e8"/><path d="M8 9l2.500 4H8z" fill="#fff" stroke="#1e96e8"/></svg></button>
                                        <button><svg viewBox="0 0 16 16"><path d="M8 0v14M4 15h8M1.500 4L8 2.500 14.500 4M3 4L.7 9.500h4.600zM13 4l-2.300 5.500h4.600z" fill="none" stroke="#1e96e8" stroke-width="1.200"/><path d="M.5 9.500h5a2.500 2 0 0 1-5 0zM10.500 9.500h5a2.500 2 0 0 1-5 0z" fill="#1e96e8"/></svg></button>
                                        <button><svg viewBox="0 0 16 16"><path d="M3.500 4H16l-1.500 6H5z" fill="#f6b21b"/><path d="M0 1.500h2.500L5 12h10" fill="none" stroke="#1e96e8" stroke-width="1.400"/><circle cx="6.500" cy="14" r="1.600" fill="#3b8fd0"/><circle cx="13" cy="14" r="1.600" fill="#3b8fd0"/></svg></button>
                                        <button><svg viewBox="0 0 16 16"><path d="M6 13v-2C2.500 8 4 3.500 8 3.500s5.500 4.500 2 7.500v2z" fill="#fff" stroke="#e8b850"/><path d="M8 0v2M2 2l1.500 1.500M14 2l-1.500 1.500M0 7h2M14 7h2" stroke="#f6b21b"/><path d="M6 7l1.500 2L10.500 6" fill="none" stroke="#1e96e8" stroke-width="1.400"/><path d="M6 14.500h4" stroke="#666" stroke-width="2"/></svg></button>
                                        <button><svg viewBox="0 0 16 16"><path d="M5 4V1.500h6V4" fill="none" stroke="#8a5d10" stroke-width="1.400"/><path d="M0 3.500h16V15H0z" fill="#c98a17"/><path d="M0 4h16v5H0z" fill="#a36b10"/><path d="M6.500 7.500h3v3h-3z" fill="#f5cf60"/></svg></button>
                                        <button><svg viewBox="0 0 16 16"><path d="M6 10V2.500a2 2 0 0 1 4 0V10a3.300 3.300 0 1 1-4 0z" fill="#fff" stroke="#888"/><circle cx="8" cy="12.500" r="2" fill="#ef3b3b"/><path d="M8 4v8" stroke="#ef3b3b" stroke-width="1.600"/><path d="M11.500 3h3M11.500 5.500h2M11.500 8h3" stroke="#f08080"/></svg></button>
                                        <button><svg viewBox="0 0 16 16"><path d="M5 8V4a3.500 3.500 0 0 1 7-.5v1" fill="none" stroke="#888" stroke-width="1.600"/><path d="M0 7.500h16V16H0z" fill="#fcb40b"/><path d="M0 7.500h16v3H0z" fill="#888"/><path d="M8 11v3" stroke="#b87a10" stroke-width="2"/></svg></button>
                                        <button><svg viewBox="0 0 16 16"><path d="M2 .5L5 3.500 4 5.500l-2 .5L0 3.500c-.5 4 2.500 5.500 5 5l7 7c2 1.500 4-.5 3-2.500l-7-6C8.500 3 5.500 0 2 .5z" fill="#888a95"/></svg></button>
                                    </div>
                                </section>
                                <section>
                                    <h3>心形</h3>
                                    <div class="icons">
                                        <button class="c-blue"><svg><use href="#heart"/></svg></button>
                                        <button class="c-green"><svg><use href="#heart"/></svg></button>
                                        <button class="c-gray"><svg><use href="#heart"/></svg></button>
                                        <button class="c-orange"><svg><use href="#heart"/></svg></button>
                                        <button class="c-red"><svg><use href="#heart"/></svg></button>
                                        <button class="c-violet"><svg><use href="#heart"/></svg></button>
                                        <button class="c-yellow"><svg><use href="#heart"/></svg></button>
                                    </div>
                                </section>
                                <section>
                                    <h3>文档</h3>
                                    <div class="icons">
                                        <button><svg viewBox="0 0 16 16"><path d="M7 14.500H1.500V.5h6l3.500 4V7M7.500.500v4H11" fill="none" stroke="#888"/><path d="M10 11V9.500a2 2 0 0 1 4 0V11" fill="none" stroke="#888"/><path d="M8 11h8v5H8z" fill="#f6b21b"/></svg></button>
                                        <button><svg viewBox="0 0 16 16"><path d="M3 12.500H.5V.5H6M7 14H3.500V2H8" fill="none" stroke="#888"/><path d="M6.500 3.500h5.500l3 3v9H6.500z" fill="#fff" stroke="#888"/><path d="M12 3.500v3h3" fill="none" stroke="#888"/></svg></button>
                                        <button><svg viewBox="0 0 16 16"><path d="M4.500 11V3c0-3 3-2.500 3-2.500h6c3 0 2 3.500 2 3.500H12v9c0 2-1.500 2.500-2.500 2.500H2.500c-3 0-2-3.500-2-3.500H9c0 3 2.500 3 2.500 3" fill="#fff" stroke="#888"/></svg></button>
                                        <button><svg viewBox="0 0 16 16"><path d="M2.500.5h7l4 4.500v10.500h-11z" fill="#fff" stroke="#888" stroke-width="1.200"/><path d="M9.500.500V5h4" fill="none" stroke="#888"/></svg></button>
                                        <button><svg viewBox="0 0 16 16"><path d="M.5 3.500h15v10H.5z" fill="#fff" stroke="#888"/><circle cx="4" cy="10" r="2.200" fill="#f6b21b"/><path d="M3 12h2v4l-1-1-1 1z" fill="#1e96e8"/></svg></button>
                                        <button><svg viewBox="0 0 16 16"><path d="M0 2h6l1.500 2H14v10H0z" fill="#d99a20"/><path d="M3 6h13l-2.500 8.500H0z" fill="#f2bb48"/></svg></button>
                                        <button><svg viewBox="0 0 16 16"><path d="M.5 2.500h15v11H.5zM.5 3L8 9.500 15.500 3M.5 13.500L6 8M15.500 13.500L10 8" fill="#fff" stroke="#1e96e8"/></svg></button>
                                    </div>
                                </section>
                                <section>
                                    <h3>日历</h3>
                                </section>
                            </div>
                            <div class="gallery-scroll"><i></i></div>
                        </div>
                        <div class="gallery-links">
                            <a href="#">更多图标...</a>
                            <a href="#">组织标记...</a>
                            <hr>
                            <a href="#">移除所有图标</a>
                        </div>
                    </div>
                </div>
                <button><svg viewBox="0 0 24 24"><path d="M14.500 2.500l8-1.500.5 8L10.500 22.500c-1 1-2 1-3 0l-6-5.500c-1-1-1-2 0-3z" fill="#7ab2ea" stroke="#3d7fc8"/><path d="M13.500 7l4.500 4-8.500 9-5-4.500z" fill="#fff"/><path d="M8 14l5-5M9.500 15.500L13 12" stroke="#999"/><circle cx="19.500" cy="5" r="1.600" fill="#fff"/></svg><span>标记</span><svg class="caret"><use href="#caret"/></svg></button>
                <button class="wide"><svg viewBox="0 0 24 24"><rect x=".5" y=".5" width="23" height="23" rx="1" fill="#fff" stroke="#777"/><path d="M15 1h8.500v22.500H15z" fill="#4a8ad0"/><path d="M19.500 2v6M17 5.500L19.500 8 22 5.500M17 11h5M17 14h5" fill="none" stroke="#fff" stroke-width="1.400"/><path d="M2.500 4.500h7v7h-7z" fill="#e2a0a0" stroke="#c06060"/><circle cx="9.500" cy="15" r="4.500" fill="#bcd8ac"/><path d="M7.500 15l1.500 2 2.500-3" fill="none" stroke="#fff" stroke-width="1.500"/></svg><span>导图索引</span><svg class="caret"><use href="#caret"/></svg></button>
            </div>
            <div class="group-name"></div>
        </div>
        <div class="group">
            <div class="tools">
                <button><svg viewBox="0 0 24 24"><g fill="none" stroke-linecap="round"><g stroke="#3f7fc6" stroke-width="5"><path d="M11 9l5-5a4 4 0 0 1 5 5l-4 4.500c-2 1.500-4 1-5-.5"/><path d="M13 15l-5 5a4 4 0 0 1-5-5l4-4.500c2-1.500 4-1 5 .5"/></g><g stroke="#7db4ec" stroke-width="3"><path d="M11 9l5-5a4 4 0 0 1 5 5l-4 4.500c-2 1.500-4 1-5-.5"/><path d="M13 15l-5 5a4 4 0 0 1-5-5l4-4.500c2-1.500 4-1 5 .5"/></g></g></svg><span>链接</span><svg class="caret"><use href="#caret"/></svg></button>
                <button class="wide"><svg viewBox="0 0 24 24"><path d="M17.500 8L9.500 16.500c-2 2-4.500-.5-2.500-2.500L15.500 4c3-3 7.500.5 5 4L11 20.500c-4 4.500-10 .5-7-5L14 3" fill="none" stroke="#777" stroke-width="1.400"/></svg><span>附加文件</span><svg class="caret"><use href="#caret"/></svg></button>
                <button><svg viewBox="0 0 24 24"><path d="M4 .5h10l6 6v17H4a1.500 1.500 0 0 1-1.500-1.500V2A1.500 1.500 0 0 1 4 .5z" fill="#fff" stroke="#777"/><path d="M14 .5v6h6z" fill="#777"/><path d="M5 7h8M5 10.500h12" stroke="#4a8ad0"/><path d="M5 14h11M5 17h8M5 20h6" stroke="#aaa"/><path d="M13 23l1-4 5-5 2.500 2.500-5 5z" fill="#4a8ad0"/><path d="M20 13l2-1 1 1-1 2z" fill="#c88a2c"/></svg><span>便笺</span><svg class="caret"><use href="#caret"/></svg></button>
                <button><svg viewBox="0 0 24 24"><path d="M12 2c15 0 15 17 0 17-2 0-3 0-4 2-1 1.500-3 2-4.500 2 1.500-2 .5-5-.5-6C-3 9 3 2 12 2z" fill="#7ab2ea" stroke="#3f7fc6"/><path d="M6 9h9M6 12h6" stroke="#fff"/><path d="M18.500 13l1.700 3.500 3.800.5-2.800 2.500.7 4-3.400-2-3.400 2 .7-4L13 17l3.800-.5z" fill="#e8b45c" stroke="#a87428"/></svg><span>新注释</span></button>
                <button><svg viewBox="0 0 24 26"><path d="M12 1c1.500 0 1.800 1.500 1.500 3 4 1 5.500 4 5.500 8 0 5 1 7 4 9v1.500H1V21c3-2 4-4 4-9 0-4 1.500-7 5.500-8-.3-1.500 0-3 1.500-3z" fill="#efb964" stroke="#b07f35"/><path d="M9 23h6l-1.500 2.500h-3z" fill="#a87428"/></svg><span>警报</span><svg class="caret"><use href="#caret"/></svg></button>
                <button class="wider"><svg viewBox="0 0 24 24"><path d="M.5 3.500h23v20H.5z" fill="#fff" stroke="#777"/><path d="M2 5h20v4H2z" fill="#f0ab45" stroke="#b07f35"/><path d="M4.500 0v4M19.500 0v4" stroke="#666" stroke-width="2"/><text x="8" y="21" font-size="12" font-weight="bold" fill="#3f86cf">5</text><circle cx="19" cy="19" r="4.500" fill="#fff" stroke="#3f86cf"/><path d="M19 16.500V19h2.500" fill="none" stroke="#3f86cf"/></svg><span>日期和时间</span><svg class="caret"><use href="#caret"/></svg></button>
                <button class="disabled"><svg viewBox="0 0 24 24"><path d="M8 6h16M8 12h16M8 18h16" stroke="#999" stroke-width="1.600"/><g font-size="7" font-weight="bold" fill="#6b9ed0"><text x="0" y="8">1</text><text x="0" y="15">2</text><text x="0" y="22">3</text></g></svg><span>编号</span><svg class="caret"><use href="#caret"/></svg></button>
            </div>
            <div class="group-name">主题元素<button class="launcher"><svg><use href="#launch"/></svg></button></div>
        </div>
        <div class="group">
            <div class="tools">
                <button><svg class="w28" viewBox="0 0 28 24"><path d="M22 4H6c-5.500 0-5.500 8 0 8h16c5.500 0 5.500 8 0 8H6" fill="none" stroke="#579a49" stroke-width="4"/><path d="M22 4H6c-5.500 0-5.500 8 0 8h16c5.500 0 5.500 8 0 8H6" fill="none" stroke="#8fbd74" stroke-width="2"/><path d="M20 0l7 4-7 4z" fill="#62a050"/><circle cx="5" cy="20" r="3.500" fill="#8fbd74" stroke="#62a050"/><use href="#plus" x="9" y="7.500" width="9" height="9" color="#62a050"/></svg><span>关系</span><svg class="caret"><use href="#caret"/></svg></button>
                <button><svg viewBox="0 0 24 24"><path d="M9 1.500h13.500v21H9L1 12z" fill="#f0f0f0" stroke="#579a49" stroke-width="3"/><path d="M9 1.500h13.500v21H9L1 12z" fill="none" stroke="#8fbd74"/><use href="#plus" x="9.500" y="7.500" width="9" height="9" color="#62a050"/></svg><span>边界</span><svg class="caret"><use href="#caret"/></svg></button>
                <button><svg viewBox="0 0 24 24"><path d="M6.500 6.500h17v17h-17z" fill="#7ab2ea" stroke="#3f7fc6"/><circle cx="6.500" cy="6.500" r="6" fill="#fff" stroke="#777"/><use href="#plus" x="10.500" y="10.500" width="9" height="9" color="#3f7fc6"/></svg><span>形状</span><svg class="caret"><use href="#caret"/></svg></button>
                <button class="wide"><svg viewBox="0 0 24 24"><rect x="1.500" y=".5" width="21" height="23" rx="1" fill="#fff" stroke="#3f7fc6"/><path d="M2 14h20v9H2z" fill="#7ab2ea"/><path d="M1.500 7h21M1.500 13.500h21" stroke="#3f7fc6"/><path d="M5.500 4h5M5.500 10.500h4M14 10.500h5" stroke="#666" stroke-width="2.400" stroke-linecap="round"/><use href="#plus" x="8" y="14.500" width="8" height="8" color="#3f7fc6"/></svg><span>智能图形</span><svg class="caret"><use href="#caret"/></svg></button>
                <button><svg viewBox="0 0 24 24"><path d="M.7.700h22.600v22.600H.7z" fill="#fff" stroke="#777" stroke-width="1.300"/><path d="M2.500 2.500h19v19h-19z" fill="#7ab2ea" stroke="#4a8ad0"/><path d="M3 21l7-13 6.500 13z" fill="#bbb" stroke="#777"/><path d="M12.500 21l4-7 4.500 7z" fill="#7cc15e" stroke="#4f9a3f"/><circle cx="17.500" cy="6.500" r="2.300" fill="#efab45" stroke="#a87428"/></svg><span>图像</span><svg class="caret"><use href="#caret"/></svg></button>
                <button><svg viewBox="0 0 24 24"><path d="M.5.500h23v23H.5z" fill="none" stroke="#777" stroke-dasharray="2 1.500"/><text x="5" y="19" font-family="Liberation Serif, serif" font-size="19" font-weight="bold" fill="#777">A</text><use href="#plus" x="13.500" y="13.500" width="9" height="9" color="#3f7fc6"/></svg><span>文本框</span></button>
            </div>
            <div class="group-name">对象</div>
        </div>
        <div class="group">
            <div class="tools">
                <button class="wide"><svg viewBox="0 0 24 24"><rect x="5.500" y="5.500" width="18" height="18" rx="1" fill="#fff" stroke="#777"/><rect x=".5" y=".5" width="18" height="18" rx="2" fill="#fff" stroke="#4a8ad0" stroke-width="1.300"/><path d="M14 4H9c-3 0-3 11 0 11h5M4 9.500h10" fill="none" stroke="#4a8ad0" stroke-width="1.300"/><path d="M11 4h4M11 9.500h4M11 15h4" stroke="#4a8ad0" stroke-width="2.600"/></svg><span>导图组件</span></button>
                <button class="wide disabled"><svg color="#3c50b0"><use href="#mapdoc"/></svg><span>插入导图</span></button>
            </div>
            <div class="group-name">内容</div>
        </div>
    </section>

    <main class="workspace">
        <div class="map-area">
            <div class="map-frame">
                <div class="canvas">
                    <svg class="links">
                        <defs>
                            <marker id="arrow" markerUnits="userSpaceOnUse" markerWidth="11" markerHeight="12" refX="0" refY="6" orient="auto"><path d="M0 0l11 6-11 6z" fill="#808080"/></marker>
                        </defs>
                        <g fill="none" stroke="#808080" stroke-width="1.300">
                            <path d="M992 153.500H971.500V115.500H930" marker-end="url(#arrow)"/>
                            <path d="M879.500 137V229.500H741" marker-end="url(#arrow)"/>
                            <path d="M690.500 254V270" marker-end="url(#arrow)"/>
                            <path d="M690.500 330V607.500H1045" marker-end="url(#arrow)"/>
                            <path d="M1090 267.500H1104"/>
                            <path d="M1107.500 242V193.500H1030.500V186" marker-end="url(#arrow)"/>
                            <path d="M1257.500 312V267.500H1191" marker-end="url(#arrow)"/>
                            <path d="M1106.500 382V342.500H1154" marker-end="url(#arrow)"/>
                            <path d="M1106.500 452V583"/>
                        </g>
                    </svg>
                    <div class="node progress"><svg viewBox="0 0 16 16"><circle cx="8" cy="8" r="7.200" fill="#fff" stroke="#2f7fd8" stroke-width="1.400"/><path d="M8 1a7 7 0 0 1 0 14z" fill="#4a9af5"/></svg>主题</div>
                    <div class="node ring"><svg><use href="#donut"/></svg>主题</div>
                    <div class="node wave people"><svg class="shape" viewBox="0 0 76 52"><path d="M.5.500H75.500V46Q57 36 38 46T.5 46z"/></svg><svg viewBox="0 0 16 16"><circle cx="5" cy="3" r="2.800" fill="#2ecc40"/><path d="M0 12c0-4 2-5 3-6.500h4C8 7 9 8 9 12z" fill="#2ecc40"/><circle cx="10.500" cy="7.500" r="2.700" fill="#fff" stroke="#2196e3"/><path d="M5.500 15.500c0-4 2-5 3.500-5h3c2 0 3.500 1.500 3.500 5z" fill="#fff" stroke="#2196e3"/></svg>主题</div>
                    <div class="node pill plain">主题</div>
                    <div class="node pill start"><svg class="c-violet"><use href="#flag"/></svg>开始</div>
                    <div class="node wave hot"><svg class="shape" viewBox="0 0 76 52"><path d="M.5.500H75.500V46Q57 36 38 46T.5 46z"/></svg><svg color="#fb8a55"><use href="#flag"/></svg>主题</div>
                    <div class="node decision"><svg class="shape" viewBox="0 0 176 62"><path d="M88 .5L175.500 31 88 61.500.5 31z"/></svg><svg><use href="#rise"/></svg>主题</div>
                    <div class="node current">
                        <svg class="shape" viewBox="0 0 101 49"><path d="M3.500 5.500h94v40h-94zM13.500 5.500v40M88.500 5.500v40"/></svg>
                        <svg><use href="#bell"/></svg>主题
                        <svg class="handle top" viewBox="0 0 20 10"><path d="M0 10l8-8q2-2 4 0l8 8z"/><path d="M10 3v6M7 6h6"/></svg>
                        <svg class="handle right" viewBox="0 0 20 10"><path d="M0 10l8-8q2-2 4 0l8 8z"/><path d="M10 3v6M7 6h6"/></svg>
                        <svg class="handle bottom" viewBox="0 0 20 10"><path d="M0 10l8-8q2-2 4 0l8 8z"/><path d="M10 3v6M7 6h6"/></svg>
                        <svg class="handle left" viewBox="0 0 20 10"><path d="M0 10l8-8q2-2 4 0l8 8z"/><path d="M10 3v6M7 6h6"/></svg>
                    </div>
                    <div class="node cylinder"><svg class="shape" viewBox="0 0 100 43"><path d="M8 .5H92c10 0 10 42 0 42H8c-10 0-10-42 0-42z"/><path d="M92 .5c-10 0-10 42 0 42"/></svg><svg><use href="#calendar"/></svg>主题</div>
                    <button class="fit-map"><svg viewBox="0 0 14 14"><path d="M.5.500h13v13H.5zM3 3h8v8H3z" fill="#f4f4f4" stroke="#888"/><path d="M5 5l4 4M5 8V5h3" fill="none" stroke="#666"/></svg></button>
                </div>
                <div class="v-scroll"><i></i></div>
                <div class="h-scroll"><i></i></div>
            </div>
            <div class="doc-tabs">
                <button class="scroll-left"><svg viewBox="0 0 8 10"><path d="M6 1v8L1.500 5z" fill="none" stroke="#777"/></svg></button>
                <div class="doc-tab">
                    <svg class="tab-shape" viewBox="0 0 30 25"><path d="M0 0h31v22H21.500z" fill="#fcfcfc"/><path d="M0 0l21.500 21.500H30" fill="none" stroke="#999"/></svg>
                    <div class="tab-body">
                        <svg class="tab-icon" color="#3a50a8"><use href="#mapdoc"/></svg>
                        <b>导图1*</b>
                        <button><svg><use href="#launch"/></svg></button>
                        <button><svg viewBox="0 0 10 10"><path d="M1.500 1.500l7 7M8.500 1.500l-7 7" stroke="currentColor" stroke-width="1.500"/></svg></button>
                    </div>
                </div>
                <button class="scroll-right"><svg viewBox="0 0 8 10"><path d="M2 1v8L6.500 5z" fill="none" stroke="#777"/></svg></button>
            </div>
        </div>

        <aside class="task-panel">
            <div class="panel-title">
                <h2>任务信息</h2>
                <button><svg viewBox="0 0 10 10"><path d="M2 2l6 6M8 2L2 8" stroke="#666" stroke-width="1.500"/></svg></button>
            </div>
            <form class="panel-form">
                <div class="section-head"><h4>定义任务信息</h4><a href="#">清除(L)</a></div>
                <div class="row first">
                    <label for="priority">优先级(P)：</label>
                    <div class="select strong"><i class="swatch"></i><select id="priority"><option>无</option></select><svg><use href="#chevron"/></svg></div>
                </div>
                <div class="row">
                    <label for="progress">进度(G)：</label>
                    <div class="select strong"><i class="swatch round"></i><select id="progress"><option>无</option></select><svg><use href="#chevron"/></svg></div>
                </div>
                <div class="row date loose">
                    <label for="start-date">起始日期(S)：</label>
                    <div class="date-box"><input type="checkbox" aria-label="起始日期"><input type="text" id="start-date" value="2021/11/17"><svg class="cal" viewBox="0 0 12 12"><path d="M.5.500h10v11h-10z" fill="#e8eef4" stroke="#888"/><path d="M2 4h7M2 6.500h7M2 9h7M4 2v9M7 2v9" stroke="#a8b4c0"/></svg><svg class="caret"><use href="#caret"/></svg></div>
                </div>
                <div class="row date">
                    <label for="due-date">截止日期(U)：</label>
                    <div class="date-box"><input type="checkbox" aria-label="截止日期"><input type="text" id="due-date" value="2021/11/17"><svg class="cal" viewBox="0 0 12 12"><path d="M.5.500h10v11h-10z" fill="#e8eef4" stroke="#888"/><path d="M2 4h7M2 6.500h7M2 9h7M4 2v9M7 2v9" stroke="#a8b4c0"/></svg><svg class="caret"><use href="#caret"/></svg></div>
                </div>
                <div class="effort">
                    <div class="effort-rows">
                        <div class="row">
                            <label for="duration">持续时间(A):</label>
                            <div class="spin"><input type="text" id="duration"><div><button type="button"><svg viewBox="0 0 8 6"><path d="M1 4.500h6l-3-3z"/></svg></button><button type="button"><svg viewBox="0 0 8 6"><path d="M1 1.500h6l-3 3z"/></svg></button></div></div>
                            <div class="select"><select aria-label="持续时间单位"><option>工作日</option></select><svg><use href="#chevron"/></svg></div>
                        </div>
                        <div class="row off">
                            <label for="effort">工作量(E)：</label>
                            <div class="spin"><input type="text" id="effort" disabled><div><button type="button"><svg viewBox="0 0 8 6"><path d="M1 4.500h6l-3-3z"/></svg></button><button type="button"><svg viewBox="0 0 8 6"><path d="M1 1.500h6l-3 3z"/></svg></button></div></div>
                            <div class="select"><select aria-label="工作量单位" disabled><option>工作日</option></select><svg><use href="#chevron"/></svg></div>
                        </div>
                    </div>
                    <div class="effort-link">
                        <svg viewBox="0 0 12 6"><path d="M2 1.500h6.500V6" fill="none" stroke="#222"/></svg>
                        <input type="checkbox" checked aria-label="链接">
                        <svg class="tall" viewBox="0 0 12 12"><path d="M8.500 0v8.500H3M5 6L2.500 8.500 5 11" fill="none" stroke="#222"/></svg>
                    </div>
                </div>
                <div class="row tall loose">
                    <label for="resources">资源(R)：</label>
                    <input type="text" class="text" id="resources">
                    <button type="button" class="pick"><svg viewBox="0 0 10 10"><path d="M1 3h8L5 7z" fill="#1660b8"/></svg></button>
                </div>
                <div class="checks">
                    <label><input type="checkbox">里程碑(M)</label>
                    <label class="off"><input type="checkbox" disabled>汇总任务信息(O)</label>
                    <label for="depends">相依关系(D)：</label>
                    <div class="select off"><select id="depends" disabled></select><svg><use href="#chevron"/></svg></div>
                </div>
                <div class="section-head cost"><h4>成本</h4></div>
                <div class="row tall loose">
                    <label for="general">常规信息(G)：</label>
                    <div class="spin"><input type="text" id="general"><div><button type="button"><svg viewBox="0 0 8 6"><path d="M1 4.500h6l-3-3z"/></svg></button><button type="button"><svg viewBox="0 0 8 6"><path d="M1 1.500h6l-3 3z"/></svg></button></div></div>
                </div>
                <div class="row tall">
                    <label for="cost-resource">资源：</label>
                    <input type="text" class="text" id="cost-resource" disabled>
                    <button type="button" class="pick"><svg viewBox="0 0 10 10"><path d="M1 3h8L5 7z" fill="#1660b8"/></svg></button>
                </div>
                <div class="row tall">
                    <label for="total">总计：</label>
                    <input type="text" class="text" id="total" disabled>
                </div>
                <label class="rollup off"><input type="checkbox" disabled>汇总成本</label>
                <a href="#" class="options">日历任务选项(C)...</a>
            </form>
        </aside>

        <nav class="side-tabs">
            <button><svg><use href="#badge"/></svg></button>
            <button class="active"><svg viewBox="0 0 16 16"><path d="M.5 2.500h14v12H.5z" fill="#fff" stroke="#777"/><path d="M1 3h13v2H1z" fill="#efab55"/><path d="M3.500 0v3M11.500 0v3" stroke="#777"/><path d="M4.500 9.500l2 2.500 4-4.500M12 13h4.500M14 10.800v4.500" fill="none" stroke="#4c9a4c" stroke-width="1.300"/></svg></button>
            <button><svg viewBox="0 0 16 16"><circle cx="8" cy="3" r="2.500" fill="#bbb" stroke="#777"/><path d="M.5 15.500C1 8 5 6.500 8 6.500s7 1.500 7.500 9z" fill="#eee" stroke="#777" stroke-width="1.200"/></svg></button>
            <button><svg viewBox="0 0 16 16"><rect x=".5" y="5.500" width="8" height="4" rx="2" fill="#fff" stroke="#777"/><path d="M8 7.500h2.500M15.500 2H12q-2 0-2 3v4q0 3 2 3M10 7.500h2" fill="none" stroke="#777"/><rect x="12" y=".5" width="4" height="2.500" rx="1" fill="#fff" stroke="#777"/><rect x="12" y="6" width="4" height="2.500" rx="1" fill="#fff" stroke="#777"/><path d="M11 13.500h5M13.500 11v5" stroke="#4c9a4c" stroke-width="1.300"/></svg></button>
            <button><svg viewBox="0 0 16 16"><path d="M3 3v12h10M15 3v8" fill="none" stroke="#666" stroke-width="1.300"/><path d="M.5.500h11v11H.5z" fill="#7ab2ea" stroke="#3f7fc6"/><path d="M2 11l4-6 4 6z" fill="#ccc" stroke="#777"/><path d="M11 13.500h5M13.500 11v5" stroke="#4c9a4c" stroke-width="1.300"/></svg></button>
            <button><svg viewBox="0 0 16 16"><circle cx="6" cy="6" r="5.300" fill="#fff" stroke="#777" stroke-width="1.300"/><path d="M10 10l5 5.500" stroke="#888" stroke-width="2.500"/></svg></button>
            <button><svg viewBox="0 0 16 16"><rect x="1" y=".5" width="10" height="9" rx="1" fill="#fff" stroke="#777"/><path d="M3 3h6v2H3z" fill="#3f7fc6"/><rect x="3.500" y="5.500" width="12" height="10" rx="1" fill="#fff" stroke="#3f7fc6" stroke-width="1.300"/><path d="M6.500 9.500h6V12h-6z" fill="#3f7fc6"/></svg></button>
            <button><svg viewBox="0 0 16 16"><circle cx="8" cy="8" r="7.400" fill="#ddd" stroke="#777" stroke-width="1.300"/><path d="M8 .5v15M.5 8h15M2 4h12M2 12h12M8 .5C3 4 3 12 8 15.500M8 .5c5 3.500 5 11.500 0 15" fill="none" stroke="#777"/></svg></button>
            <button><svg viewBox="0 0 16 16"><path d="M0 2l9-2v16l-9-2z" fill="#4b8f1c"/><path d="M2.500 5l4 6M6.500 5l-4 6" stroke="#fff" stroke-width="1.500"/><path d="M10.500 2v13M13.500 2v13" stroke="#4b8f1c" stroke-width="2" stroke-dasharray="2 1"/></svg></button>
        </nav>

        <div class="watermark">awdown.com</div>
    </main>

    <footer class="statusbar">
        <button class="shadow-mode">Shadow Mode</button>
        <div class="status-tools">
            <button><svg viewBox="0 0 16 16"><path d="M0 1h16v2l-6 5v8l-4-3V8L0 3z" fill="#666"/></svg></button>
            <button class="drop"><svg class="caret"><use href="#caret"/></svg></button>
            <button><svg viewBox="0 0 16 16"><path d="M0 1h15v2l-5 4-2 4h2l-1 4-3-2V8L0 3z" fill="#666"/><path d="M13 7l-4 5h2.500L10 16l5-5.500h-2.500L15 7z" fill="#666"/></svg></button>
            <button class="drop"><svg class="caret"><use href="#caret"/></svg></button>
            <button class="space"><svg viewBox="0 0 16 16"><path d="M4 3a6.500 6.500 0 1 0 7-.5M4.500 8.500h7M8 5v7" fill="none" stroke="#555" stroke-width="1.300"/><path d="M3 .5l4 1-3 3.500z" fill="#555"/></svg></button>
            <button class="drop"><svg class="caret"><use href="#caret"/></svg></button>
            <button class="view dim"><svg viewBox="0 0 16 16"><path d="M.5.500h15v15H.5z" fill="none" stroke="#777" stroke-dasharray="2 1"/><path d="M3 3l2 2M13 3l-2 2M3 13l2-2M13 13l-2-2M7 8h2" stroke="#777" stroke-width="2"/></svg></button>
            <button class="view"><svg viewBox="0 0 16 16"><rect x=".5" y=".5" width="15" height="15" rx="1" fill="none" stroke="#555"/><path d="M3 4h6M3 7h8M3 10h5M3 13h7" stroke="#555"/></svg></button>
            <button class="view"><svg viewBox="0 0 16 16"><path d="M.5.500h15v15H.5z" fill="#fff" stroke="#555"/><path d="M0 0h16v5H0z" fill="#555"/><text x="3" y="13.500" font-size="8" font-weight="bold" fill="#444">24</text></svg></button>
            <button class="view"><svg viewBox="0 0 16 16"><rect x=".5" y=".5" width="15" height="15" rx="1" fill="#fff" stroke="#555"/><path d="M2.500 2.500h7v7h-7z" fill="#555"/><circle cx="10" cy="10" r="4" fill="#fff" stroke="#555" stroke-width="1.500"/><path d="M8 10l1.500 2 2.500-3" fill="none" stroke="#555"/></svg></button>
            <button class="view"><svg viewBox="0 0 16 16"><rect x=".5" y=".5" width="15" height="15" rx="1" fill="#fff" stroke="#555"/><path d="M9 3h5v5l-7 6-4.500-4.500z" fill="#555"/><path d="M6 10l4-4" stroke="#fff" stroke-width="1.500"/></svg></button>
            <button class="view"><svg viewBox="0 0 16 16"><path d="M1.500.500h14v15h-14zM0 4h3M0 8h3M0 12h3M5 4h8M5 7h8M5 10h4" fill="none" stroke="#555"/><path d="M9.500 9.500h4v5h-4zM11 11v5" fill="none" stroke="#555" stroke-width="1.500"/></svg></button>
            <span class="zoom-value">100%</span>
            <button class="zoom-btn">−</button>
            <input type="range" aria-label="缩放">
            <button class="zoom-btn">+</button>
            <button class="fit"><svg viewBox="0 0 16 16"><path d="M1.500 1.500h13v13h-13z" fill="none" stroke="#555"/><path d="M8 3v3M8 10v3M3 8h3M10 8h3M6.500 4.500L8 3l1.500 1.500M6.500 11.500L8 13l1.500-1.500M4.500 6.500L3 8l1.500 1.500M11.500 6.500L13 8l-1.500 1.500" fill="none" stroke="#555"/></svg></button>
            <button class="panes"><svg viewBox="0 0 16 16"><path d="M1 2h9v12H1z" fill="#555"/><path d="M10.500 2.500h4v11h-4z" fill="#fff" stroke="#555"/></svg></button>
            <button class="drop last"><svg class="caret"><use href="#caret"/></svg></button>
        </div>
    </footer>
</body>
</html>
```
FILE: styles.css
```css
* {
    margin: 0;
    padding: 0;
    box-sizing: border-box;
}

body {
    display: flex;
    flex-direction: column;
    min-height: 100vh;
    background-color: #f0f0f0;
    font-family: "Noto Sans", "Noto Sans CJK SC", sans-serif;
    font-size: 12px;
    line-height: 16px;
    color: #444;
}

button,
input,
select {
    font: inherit;
    color: inherit;
    background: none;
    border: none;
    border-radius: 0;
    outline: none;
}

a {
    color: inherit;
    text-decoration: none;
}

svg {
    display: block;
    flex-shrink: 0;
    width: 16px;
    height: 16px;
}

svg.caret {
    width: 8px;
    height: 8px;
}

.sprite {
    display: none;
}

/* icon colours */
.c-blue { color: #1e96e8; }
.c-green { color: #2ecc40; }
.c-gray { color: #999ba3; }
.c-orange { color: #f9844a; }
.c-red { color: #ef3b3b; }
.c-violet { color: #9090f8; }
.c-yellow { color: #fcb40b; }

/* title bar */
.titlebar {
    display: flex;
    align-items: center;
    height: 34px;
    background-color: #2b579a;
    color: #fff;
}

.quick {
    display: flex;
    align-items: center;
    gap: 9px;
    padding-left: 16px;
}

.quick button {
    width: 21px;
    display: flex;
    justify-content: center;
}

.quick .q-small {
    width: 17px;
}

.quick .q-caret {
    width: 8px;
    margin-left: -5px;
}

.quick .q-more {
    margin-left: -3px;
}

.quick .q-caret svg {
    width: 8px;
    height: 8px;
}

.quick .q-dim {
    opacity: 0.5;
}

.q-sep {
    width: 1px;
    height: 22px;
    background-color: #b8c6de;
}

.titlebar h1 {
    flex: 1;
    text-align: center;
    font-size: 12px;
    font-weight: normal;
}

.window-buttons {
    display: flex;
}

.window-buttons button {
    width: 37px;
    display: flex;
    justify-content: center;
}

.window-buttons svg {
    width: 14px;
    height: 12px;
}

/* ribbon tabs */
.menubar {
    display: flex;
    height: 38px;
    padding-left: 1px;
}

.menubar a {
    width: 52px;
    height: 35px;
    display: flex;
    justify-content: center;
    line-height: 38px;
}

.menubar .active {
    width: 26px;
    margin: 0 13px;
    font-weight: bold;
    border-bottom: 3px solid #1660b8;
}

.find {
    display: flex;
    align-items: center;
    gap: 3px;
    margin-left: auto;
    padding: 0 5px 4px 0;
}

.find-box {
    display: flex;
    align-items: center;
    width: 125px;
    height: 23px;
    padding-right: 3px;
    border: 1px solid #bbb;
    background-color: #fff;
}

.find-box input {
    flex: 1;
    min-width: 0;
}

.find-box svg {
    width: 8px;
    height: 8px;
}

.find i {
    width: 1px;
    height: 14px;
    background-color: #ccc;
}

.find .help {
    width: 16px;
    height: 16px;
    border: 1px solid #444;
    color: #2b579a;
    font-size: 14px;
    font-weight: bold;
    line-height: 14px;
}

/* ribbon */
.ribbon {
    display: flex;
    height: 99px;
    border-bottom: 1px solid #bbb;
}

.group {
    height: 94px;
    padding: 2px 5px 0;
    border-right: 1px solid #ccc;
}

.group:first-child {
    padding-left: 8px;
}

.group:nth-child(2) {
    padding-right: 4px;
}

.tools {
    display: flex;
    height: 72px;
}

.tools > button,
.dropdown > button {
    display: flex;
    flex-direction: column;
    align-items: center;
    width: 49px;
    height: 72px;
    padding-top: 7px;
    white-space: nowrap;
}

.tools > .wide {
    width: 60px;
}

.tools > .wider {
    width: 72px;
}

.tools > button > svg:first-child,
.dropdown > button > svg:first-child {
    width: 24px;
    height: 24px;
}

.tools > button > .w28:first-child {
    width: 28px;
}

.tools span {
    margin: 8px 0 3px;
}

.tools .disabled {
    opacity: 0.5;
}

.tools .open {
    background-color: #c6c6c6;
}

.group-name {
    display: flex;
    justify-content: center;
    position: relative;
    line-height: 22px;
    color: #666;
}

.launcher {
    position: absolute;
    right: 0;
    top: 6px;
}

.launcher svg {
    width: 10px;
    height: 10px;
}

/* icon gallery */
.dropdown {
    position: relative;
}

.gallery {
    position: absolute;
    top: 71px;
    left: 0;
    z-index: 10;
    width: 213px;
    background-color: #f9f8f7;
    border: 1px solid #b0b0b0;
    box-shadow: 3px 3px 3px rgba(0, 0, 0, 0.35);
}

.gallery-body {
    display: flex;
    height: 380px;
    overflow: hidden;
}

.gallery-list {
    flex: 1;
    padding: 0 3px;
    margin-top: -4px;
}

.gallery section {
    border-bottom: 1px solid #ccc;
}

.gallery h3 {
    height: 16px;
    font-size: 12px;
    line-height: 22px;
}

.icons {
    display: grid;
    grid-template-columns: repeat(9, 21px);
}

.icons button {
    display: flex;
    align-items: center;
    justify-content: center;
    height: 21px;
}

.icons .selected {
    border: 1px solid #aaa;
}

.gallery-scroll {
    width: 16px;
    padding: 104px 7px 0;
    background-color: #f0f0f0;
}

.gallery-scroll i {
    display: block;
    width: 2px;
    height: 92px;
    background-color: #888;
}

.gallery-links {
    display: flex;
    flex-direction: column;
    padding: 1px 2px;
}

.gallery-links a {
    padding-left: 5px;
    line-height: 23px;
}

.gallery-links hr {
    margin: 1px 0;
    border: none;
    border-top: 1px solid #ccc;
}

/* map */
.workspace {
    flex: 1;
    display: flex;
    position: relative;
}

.map-area {
    flex: 1;
    min-width: 0;
    display: flex;
    flex-direction: column;
    border-right: 4px solid #d2d2d2;
}

.map-frame {
    flex: 1;
    display: grid;
    grid-template-columns: 1fr 19px;
    grid-template-rows: 1fr 17px;
    margin: 2px 2px 0;
    border: 2px solid #777;
    border-right: 1px solid #999;
    border-bottom: 1px solid #aaa;
    background-color: #f0f0f0;
}

.canvas {
    position: relative;
    overflow: hidden;
    background-color: #fff;
}

.links {
    position: absolute;
    width: 100%;
    height: 100%;
}

.node {
    position: absolute;
    display: flex;
    align-items: center;
    justify-content: center;
    gap: 6px;
    border: 1px solid #808080;
    background-color: #f8f8f8;
    font-size: 16px;
    line-height: 20px;
    white-space: nowrap;
    color: #505050;
}

.node .shape {
    position: absolute;
    inset: 0;
    z-index: -1;
    width: 100%;
    height: 100%;
    fill: #f8f8f8;
    stroke: #808080;
}

.pill {
    border-radius: 18px;
}

.wave,
.decision,
.current,
.cylinder {
    z-index: 0;
    border: none;
    background: none;
}

.progress {
    left: 840px;
    top: 95px;
    width: 79px;
    height: 42px;
}

.ring {
    left: 992px;
    top: 133px;
    width: 78px;
    height: 42px;
}

.wave {
    width: 76px;
    height: 52px;
    padding-bottom: 12px;
}

.people {
    left: 652px;
    top: 204px;
}

.plain {
    left: 645px;
    top: 284px;
    width: 91px;
    height: 42px;
}

.start {
    left: 973px;
    top: 246px;
    width: 114px;
    height: 42px;
    color: #222;
}

.hot {
    left: 1103px;
    top: 241px;
}

.hot .shape {
    fill: #f95d1a;
}

.decision {
    left: 1170px;
    top: 312px;
    width: 176px;
    height: 62px;
    gap: 10px;
}

.current {
    left: 1056px;
    top: 393px;
    width: 101px;
    height: 49px;
    border: 2px solid #3cb54a;
    border-top-width: 5px;
    border-radius: 4px;
    padding-bottom: 3px;
}

.current .shape {
    inset: -5px -2px -2px;
    width: 101px;
    height: 49px;
}

.current .handle {
    position: absolute;
    width: 20px;
    height: 10px;
    fill: #3cb54a;
    stroke: #fff;
    stroke-width: 0;
}

.handle path:last-child {
    stroke-width: 2;
}

.handle.top {
    left: 38px;
    top: -15px;
}

.handle.right {
    right: -16px;
    top: 14px;
    transform: rotate(90deg);
}

.handle.bottom {
    left: 38px;
    bottom: -12px;
    transform: rotate(180deg);
}

.handle.left {
    left: -16px;
    top: 14px;
    transform: rotate(-90deg);
}

.cylinder {
    left: 1056px;
    top: 586px;
    width: 100px;
    height: 43px;
    padding-right: 8px;
}

.fit-map {
    position: absolute;
    right: 1px;
    bottom: 1px;
}

.v-scroll {
    grid-row: span 2;
    padding: 380px 0 0 8px;
}

.v-scroll i {
    display: block;
    width: 2px;
    height: 117px;
    background-color: #888;
}

.h-scroll {
    padding: 7px 0 0 507px;
}

.h-scroll i {
    display: block;
    width: 413px;
    height: 2px;
    background-color: #888;
}

/* document tabs */
.doc-tabs {
    display: flex;
    height: 25px;
    background-color: #e6e6e6;
}

.doc-tabs > button {
    padding: 0 4px 0 3px;
}

.doc-tabs > button svg {
    width: 8px;
    height: 10px;
}

.scroll-right {
    margin-left: auto;
    margin-right: 7px;
}

.doc-tab {
    display: flex;
    height: 22px;
}

.tab-shape {
    width: 30px;
    height: 25px;
}

.tab-body {
    display: flex;
    align-items: center;
    border: 1px solid #999;
    border-width: 0 1px 1px 0;
    border-radius: 0 0 3px 0;
    background-color: #fcfcfc;
    padding-right: 7px;
}

.tab-body .tab-icon {
    width: 14px;
    height: 16px;
}

.tab-body b {
    margin: 0 13px 0 10px;
    color: #1660b8;
}

.tab-body button {
    width: 10px;
    margin-left: 10px;
    color: #666;
}

.tab-body b + button {
    margin-left: 0;
}

.tab-body button svg {
    width: 10px;
    height: 10px;
}

/* task panel */
.task-panel {
    width: 300px;
    background-color: #f9f8f7;
    color: #111;
}

.panel-title {
    display: flex;
    align-items: center;
    justify-content: space-between;
    height: 38px;
    padding: 0 6px 0 4px;
    background-color: #e6e6e6;
    color: #444;
}

.panel-title h2 {
    font-size: 21px;
    font-weight: normal;
    line-height: 30px;
}

.panel-title svg {
    width: 10px;
    height: 10px;
}

.panel-form {
    display: flex;
    flex-direction: column;
    padding: 0 12px 0 5px;
}

.section-head {
    display: flex;
    justify-content: space-between;
    height: 25px;
    margin-right: -6px;
    padding-right: 8px;
    border-bottom: 1px solid #bbb;
    line-height: 27px;
}

.section-head.cost {
    margin-top: 21px;
}

.section-head h4 {
    font-size: 12px;
}

.section-head a {
    height: 25px;
    padding: 0 2px;
    background-color: #f9f8f7;
    color: #b5c4d4;
    text-decoration: underline;
}

.row {
    display: flex;
    align-items: center;
    height: 22px;
    margin-top: 4px;
}

.row.first {
    margin-top: 6px;
}

.row.date {
    height: 24px;
    margin-top: 5px;
}

.row.tall {
    height: 23px;
    margin-top: 6px;
}

.row.loose,
.row.date.loose {
    margin-top: 9px;
}

.row > label {
    flex: none;
    width: 97px;
    white-space: nowrap;
}

.select {
    flex: 1;
    min-width: 0;
    height: 22px;
    display: flex;
    align-items: center;
    padding: 0 3px;
    border: 1px solid #e0e0e0;
    background-color: #fff;
}

.select.strong {
    border-color: #888;
}

.select select {
    flex: 1;
    min-width: 0;
    appearance: none;
    opacity: 1;
}

.select svg {
    width: 10px;
    height: 10px;
    color: #555;
}

.swatch {
    width: 18px;
    height: 16px;
    margin: 0 4px 0 1px;
    border: 1px solid #bbb;
    border-radius: 3px;
    background-color: #f9f9f9;
}

.swatch.round {
    border-radius: 50%;
}

.date-box {
    flex: 1;
    min-width: 0;
    display: flex;
    align-items: center;
    height: 24px;
    padding: 0 5px 0 4px;
    border: 1px solid #ccc;
    font-size: 11px;
    color: #777;
}

.date-box input[type="text"] {
    flex: 1;
    min-width: 0;
    padding-left: 5px;
}

.date-box .cal {
    width: 12px;
    height: 12px;
}

.date-box .caret {
    width: 10px;
    height: 10px;
    color: #2b4a7a;
}

input[type="checkbox"] {
    appearance: none;
    flex-shrink: 0;
    width: 13px;
    height: 13px;
    border: 1px solid #666;
    border-radius: 3px;
}

.off {
    color: #777;
}

.off input[type="checkbox"] {
    border-color: #bbb;
}

.effort {
    display: flex;
    margin-top: 5px;
}

.effort-rows {
    flex: 1;
}

.effort-rows > .off > label {
    color: #111;
}

.effort .spin {
    flex: none;
    width: 61px;
    margin-right: 6px;
}

.effort-link {
    display: flex;
    flex-direction: column;
    align-items: center;
    width: 14px;
    padding-top: 13px;
}

.effort-link svg {
    width: 12px;
    height: 6px;
}

.effort-link .tall {
    height: 12px;
    margin-top: 3px;
}

.effort-link input[type="checkbox"] {
    display: grid;
    place-items: center;
    border-color: #1660b8;
    background-color: #1660b8;
}

.effort-link input::after {
    content: "";
    width: 7px;
    height: 4px;
    border: solid #fff;
    border-width: 0 0 1px 1px;
    transform: rotate(-45deg);
}

.spin {
    flex: 1;
    display: flex;
    height: 100%;
    border: 1px solid #ddd;
    border-bottom-color: #888;
    background-color: #fff;
}

.spin input {
    flex: 1;
    min-width: 0;
}

.spin > div {
    display: flex;
    flex-direction: column;
    gap: 1px;
    width: 17px;
    padding: 1px;
    border-left: 1px solid #aaa;
    background-color: #f4f4f4;
}

.spin button {
    flex: 1;
    display: flex;
    align-items: center;
    justify-content: center;
    border: 1px solid #aaa;
    background-color: #eee;
}

.spin svg {
    width: 8px;
    height: 6px;
}

.off .spin,
.off .select,
.select.off {
    border-color: #ccc;
    background-color: #f6f5f4;
}

.off .spin svg {
    opacity: 0.6;
}

.off .select svg,
.select.off svg {
    color: #aaa;
}

.text {
    flex: 1;
    min-width: 0;
    height: 100%;
    border: 1px solid #ddd;
    border-bottom-color: #888;
    background-color: #fff;
}

.text:disabled {
    border-color: #bbb;
    background-color: #f6f5f4;
}

.pick {
    display: flex;
    align-items: center;
    justify-content: center;
    width: 20px;
    height: 20px;
    margin-left: 6px;
    border: 1px solid #ccc;
    border-radius: 3px;
    background-color: #fff;
}

.pick svg {
    width: 10px;
    height: 10px;
}

.checks {
    display: flex;
    flex-direction: column;
    margin-top: 17px;
}

.checks label,
.rollup {
    display: flex;
    align-items: center;
    gap: 2px;
    height: 24px;
}

.checks input,
.rollup input {
    margin-left: 1px;
}

.checks .select {
    flex: none;
}

.rollup {
    margin-top: 5px;
}

.options {
    align-self: flex-start;
    margin: 27px 0 0 3px;
    line-height: 20px;
    color: #1a6fc0;
    text-decoration: underline;
}

/* side tabs */
.side-tabs {
    display: flex;
    flex-direction: column;
    width: 30px;
    padding-top: 14px;
    border-left: 1px solid #aaa;
    background-color: #f0f0f0;
}

.side-tabs button {
    display: flex;
    align-items: center;
    justify-content: center;
    width: 28px;
    height: 30px;
    border: 1px solid #aaa;
    border-left: none;
    border-bottom-width: 0;
    border-radius: 0 5px 0 0;
    background-color: #e6e6e6;
}

.side-tabs button:last-child {
    border-bottom-width: 1px;
}

.side-tabs .active {
    width: 29px;
    margin-left: -1px;
    background-color: #f9f8f7;
}

.watermark {
    position: absolute;
    right: 21px;
    top: 275px;
    font-family: "DejaVu Sans", sans-serif;
    font-size: 111px;
    font-weight: bold;
    line-height: 110px;
    color: #949494;
    pointer-events: none;
}

/* status bar */
.statusbar {
    display: flex;
    align-items: center;
    justify-content: flex-end;
    height: 26px;
    border-top: 1px solid #ccc;
}

.shadow-mode {
    width: 137px;
    height: 25px;
    margin-right: 123px;
    border: 1px solid #4a9a9a;
    border-bottom: 2px solid #1c4a4a;
    border-radius: 4px;
    background-color: #e9eeee;
    font-family: "Liberation Sans", sans-serif;
    font-size: 18px;
    line-height: 20px;
    color: #1c1cc0;
    text-shadow: 3px 3px 3px #888;
}

.status-tools {
    display: flex;
    align-items: center;
}

.drop {
    width: 15px;
    display: flex;
    justify-content: center;
}

.drop.last {
    width: 12px;
}

.status-tools .space {
    margin-left: 8px;
}

.view {
    margin-left: 8px;
}

.drop + .view {
    margin-left: 0;
}

.dim {
    opacity: 0.4;
}

.zoom-value {
    width: 55px;
    padding-left: 11px;
}

.zoom-btn {
    width: 16px;
    font-size: 16px;
    color: #777;
}

.status-tools input[type="range"] {
    appearance: none;
    width: 87px;
    height: 16px;
    margin: 0 7px 0 6px;
    background: linear-gradient(#aaa, #aaa) center / 100% 1px no-repeat;
}

.status-tools input[type="range"]::-webkit-slider-thumb {
    appearance: none;
    width: 5px;
    height: 14px;
    border: 1px solid #888;
    background-color: #eee;
}

.fit {
    margin: 0 14px 0 4px;
}
```
